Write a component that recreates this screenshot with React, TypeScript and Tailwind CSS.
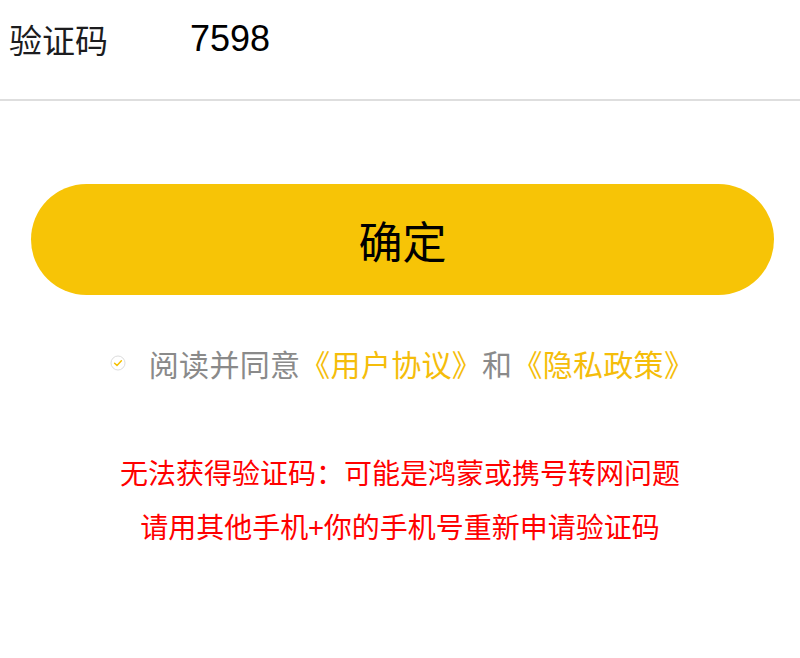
import type { FC } from "react";

const cjk = "font-['Noto_Sans_CJK_SC','Noto_Sans',sans-serif]";

const CheckIcon: FC = () => (
  <svg width="16" height="16" viewBox="0 0 16 16" className="shrink-0">
    <circle cx="8" cy="8" r="7" fill="none" stroke="#dcdcdc" strokeWidth="1" />
    <path d="M4.6 8.2 L7 10.4 L11.4 5.8" fill="none" stroke="#f5c000" strokeWidth="1.5" strokeLinecap="round" strokeLinejoin="round" />
  </svg>
);

export default function App() {
  return (
    <div className={`flex h-[658px] w-[800px] flex-col bg-white ${cjk}`}>
      <div className="flex h-[101px] items-start border-b-2 border-[#dedede] pl-[9px] pt-[15px]">
        <span className="w-[181px] text-[33px] leading-[48px] text-[#1c1c1e]">验证码</span>
        <span className="font-['Liberation_Sans',sans-serif] text-[36px] leading-[48px] text-black">7598</span>
      </div>

      <button className="ml-[31px] mr-[26px] mt-[83px] flex h-[111px] items-center justify-center rounded-full bg-[#f7c406] text-[44px] text-black">
        确定
      </button>

      <div className="mt-[48px] flex items-center justify-center gap-[23px] pl-[4px]">
        <CheckIcon />
        <div className="text-[30px] leading-[40px] tracking-[0.3px] text-[#8a8a8a]">
          阅读并同意
          <span className="text-[#f5bd0a]">《用户协议》</span>
          和
          <span className="text-[#f5bd0a]">《隐私政策》</span>
        </div>
      </div>

      <div className="mt-[70px] flex flex-col items-center gap-[16px] text-[28px] leading-[38px] text-[#ff0000]">
        <div>无法获得验证码：可能是鸿蒙或携号转网问题</div>
        <div>请用其他手机+你的手机号重新申请验证码</div>
      </div>
    </div>
  );
}
